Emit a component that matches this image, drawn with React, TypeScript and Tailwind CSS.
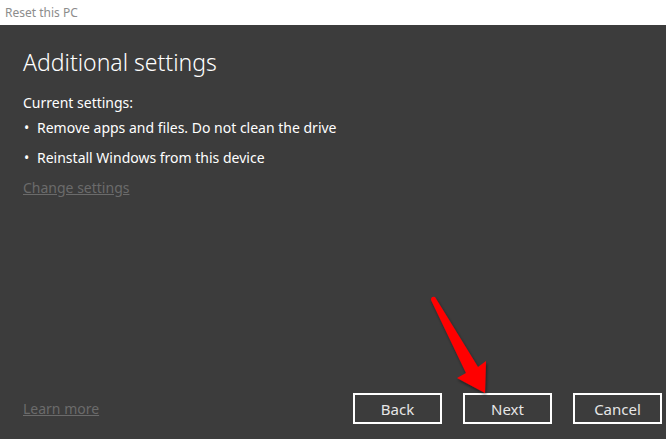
import React from 'react'

const font = { fontFamily: '"Noto Sans", "Open Sans", sans-serif' }

function DialogButton({ label }: { label: string }) {
  return (
    <button className="w-[89px] h-[31px] border-2 border-white text-[15px] text-[#e6e6e6] leading-none flex items-center justify-center pt-[1px]">
      {label}
    </button>
  )
}

export default function App() {
  return (
    <div className="relative w-[666px] h-[439px] overflow-hidden bg-[#3c3c3c] flex flex-col" style={font}>
      <div className="h-[25px] bg-white flex items-center px-[5px] shrink-0">
        <span className="text-[12px] text-[#8c8c8c]">Reset this PC</span>
      </div>

      <div className="flex-1 flex flex-col pl-[23px]">
        <h1 className="mt-[21px] text-[23px] font-light text-white leading-[32px]">Additional settings</h1>
        <p className="mt-[15px] text-[14px] text-white leading-[20px]">Current settings:</p>
        <ul className="mt-[5px] flex flex-col gap-[10px] text-[14px] text-white leading-[20px]">
          <li className="flex">
            <span className="w-[14px] pl-[1px]">•</span>
            <span>Remove apps and files. Do not clean the drive</span>
          </li>
          <li className="flex">
            <span className="w-[14px] pl-[1px]">•</span>
            <span>Reinstall Windows from this device</span>
          </li>
        </ul>
        <a className="mt-[10px] self-start text-[14px] text-[#6b6b6b] underline leading-[20px]">Change settings</a>

        <div className="mt-auto mb-[15px] flex items-center pr-[4px]">
          <a className="text-[14px] text-[#6b6b6b] underline">Learn more</a>
          <div className="ml-auto flex gap-[21px]">
            <DialogButton label="Back" />
            <DialogButton label="Next" />
            <DialogButton label="Cancel" />
          </div>
        </div>
      </div>

      <svg className="absolute left-0 top-0 pointer-events-none" width="666" height="439" viewBox="0 0 666 439">
        <defs>
          <filter id="sh" x="-20%" y="-20%" width="140%" height="140%">
            <feDropShadow dx="1" dy="2" stdDeviation="1.5" floodColor="#000" floodOpacity="0.5" />
          </filter>
        </defs>
        <path
          d="M431 300 Q431 296 435 297 L478 367 L486 361 L485 393 L457 378 L466 373 Z"
          fill="#ff0000"
          filter="url(#sh)"
        />
      </svg>
    </div>
  )
}
